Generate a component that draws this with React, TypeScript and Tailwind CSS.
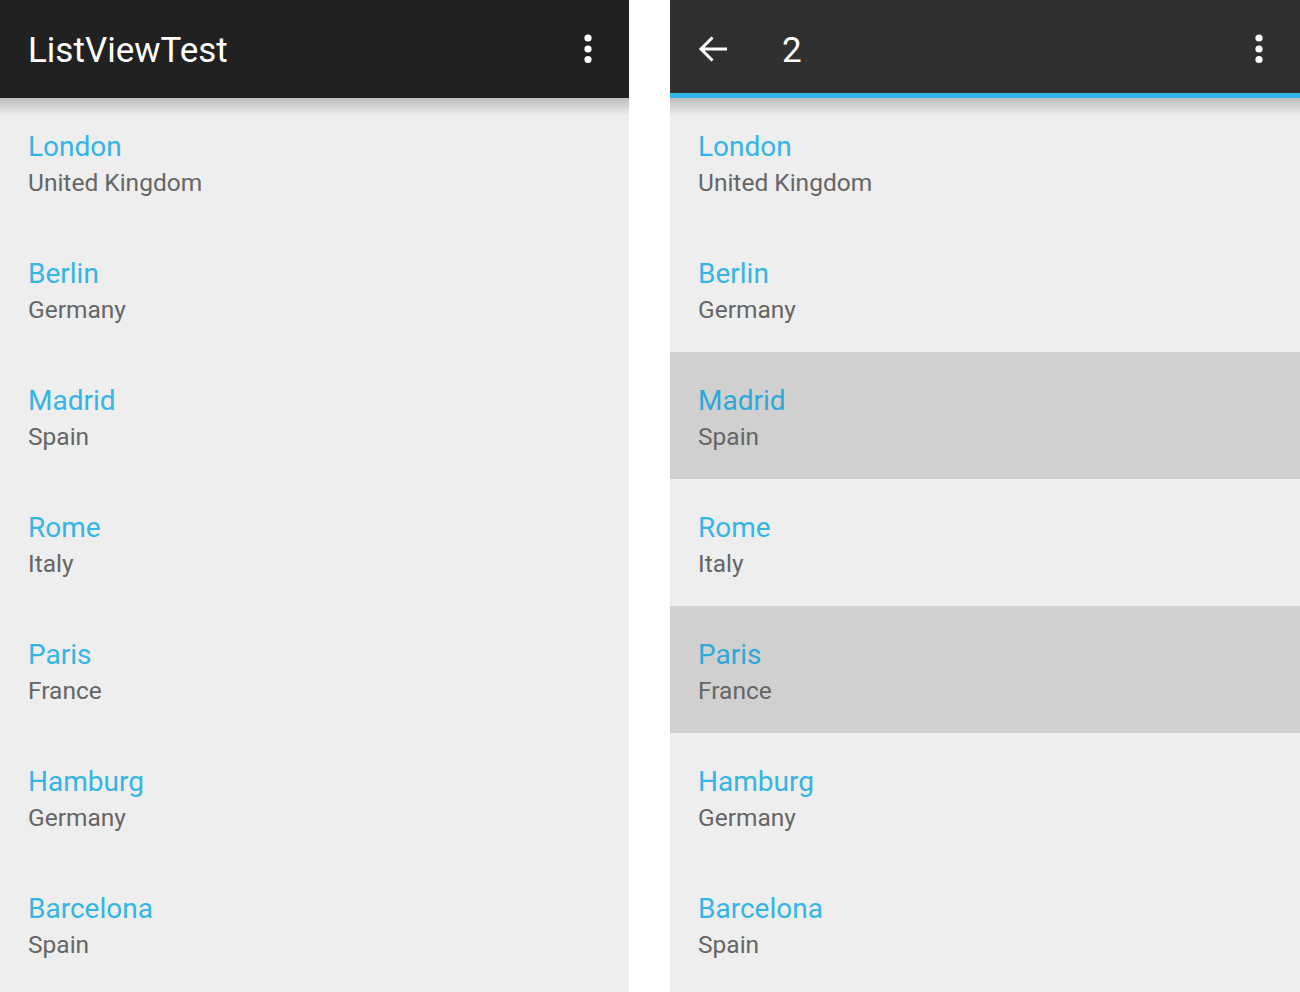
import React from "react";

const cities = [
  { name: "London", country: "United Kingdom" },
  { name: "Berlin", country: "Germany" },
  { name: "Madrid", country: "Spain" },
  { name: "Rome", country: "Italy" },
  { name: "Paris", country: "France" },
  { name: "Hamburg", country: "Germany" },
  { name: "Barcelona", country: "Spain" },
];

function Dots() {
  return (
    <svg width="8" height="30" viewBox="0 0 8 30" className="block">
      <circle cx="4" cy="4" r="3.6" fill="#fff" />
      <circle cx="4" cy="15" r="3.6" fill="#fff" />
      <circle cx="4" cy="25.5" r="3.6" fill="#fff" />
    </svg>
  );
}

function BackArrow() {
  return (
    <svg width="30" height="28" viewBox="0 0 30 28" className="block">
      <path d="M29 14H3M14.5 2.5L3 14l11.5 11.5" stroke="#fff" strokeWidth="3" fill="none" />
    </svg>
  );
}

function Row({ name, country, selected }: { name: string; country: string; selected?: boolean }) {
  return (
    <div className={`h-[127px] pl-[28px] pt-[32px] ${selected ? "bg-[#d0d0d0]" : ""}`}>
      <div className={`text-[28px] leading-[34px] ${selected ? "text-[#2ea8d8]" : "text-[#33b5e5]"}`}>{name}</div>
      <div className="text-[24.5px] leading-[30px] mt-[4px] text-[#666666]">{country}</div>
    </div>
  );
}

function Panel({ mode }: { mode: "normal" | "action" }) {
  const action = mode === "action";
  return (
    <div className="relative h-full bg-[#eeeeee] overflow-hidden">
      {action ? (
        <div className="h-[98px] bg-[#303030] border-b-[5px] border-[#33b5e5] flex items-center pt-[5px] pl-[28px] pr-[37px]">
          <BackArrow />
          <span className="ml-[54px] text-white text-[35px] leading-[40px] mt-[3px]">2</span>
          <div className="ml-auto">
            <Dots />
          </div>
        </div>
      ) : (
        <div className="h-[98px] bg-[#212121] flex items-center pl-[28px] pr-[37px]">
          <span className="text-white text-[35px] leading-[40px] mt-[3px]">ListViewTest</span>
          <div className="ml-auto">
            <Dots />
          </div>
        </div>
      )}
      <div className="absolute left-0 right-0 top-[98px] h-[18px] bg-gradient-to-b from-[#bdbdbd] to-transparent pointer-events-none" />
      <div>
        {cities.map((c, i) => (
          <Row key={c.name} name={c.name} country={c.country} selected={action && (i === 2 || i === 4)} />
        ))}
      </div>
    </div>
  );
}

export default function App() {
  return (
    <div className="w-[1300px] h-[992px] bg-white flex" style={{ fontFamily: "Roboto, 'Noto Sans', sans-serif" }}>
      <div className="w-[629px] h-full">
        <Panel mode="normal" />
      </div>
      <div className="w-[41px]" />
      <div className="w-[630px] h-full">
        <Panel mode="action" />
      </div>
    </div>
  );
}
